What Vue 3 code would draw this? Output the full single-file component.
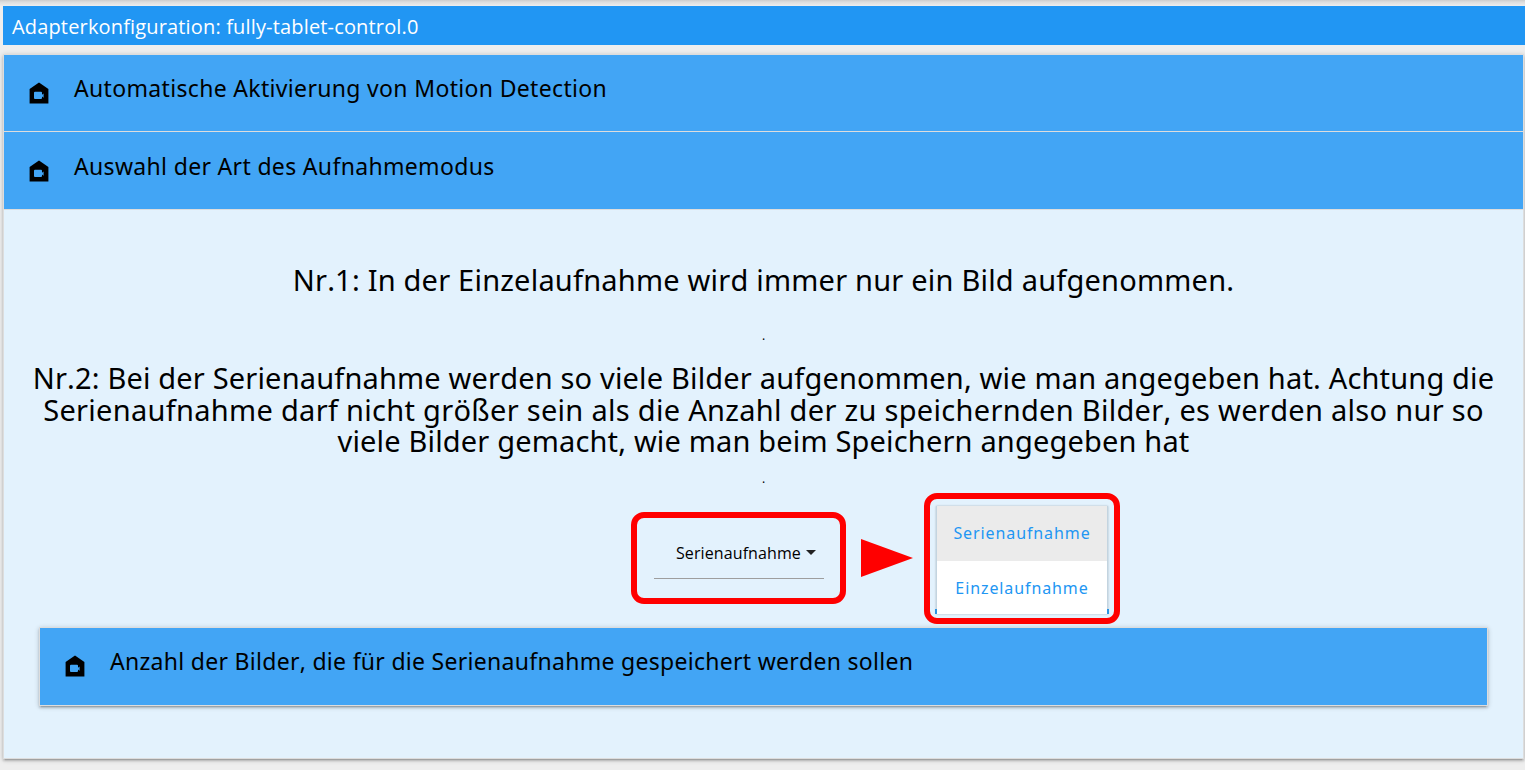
<script setup>
const headers = [
  { text: 'Automatische Aktivierung von Motion Detection', cls: 'h1' },
  { text: 'Auswahl der Art des Aufnahmemodus', cls: 'h2' },
]
const options = ['Serienaufnahme', 'Einzelaufnahme']
const lines = [
  'Nr.2: Bei der Serienaufnahme werden so viele Bilder aufgenommen, wie man angegeben hat. Achtung die',
  'Serienaufnahme darf nicht größer sein als die Anzahl der zu speichernden Bilder, es werden also nur so',
  'viele Bilder gemacht, wie man beim Speichern angegeben hat',
]
const house = 'M12 1.5 2.6 8v14.6h18.8V8zM8 10.8h6q1 0 1 1v2l1.6-1.300v4.300L15 15.500v1.500q0 1-1 1H8q-1 0-1-1v-5.200q0-1 1-1z'
</script>

<template>
  <main class="page">
    <header class="title"><span>Adapterkonfiguration: fully-tablet-control.0</span></header>
    <section class="panel">
      <div v-for="h in headers" :key="h.text" class="head" :class="h.cls">
        <svg class="icon" viewBox="0 0 24 24"><path fill-rule="evenodd" :d="house" /></svg>
        <span>{{ h.text }}</span>
      </div>
      <div class="body">
        <p class="copy first"><span>Nr.1: In der Einzelaufnahme wird immer nur ein Bild aufgenommen.</span></p>
        <p class="dot">.</p>
        <p class="copy second"><span v-for="(l, i) in lines" :key="i" :class="'l' + i">{{ l }}</span></p>
        <p class="dot low">.</p>
        <div class="demo">
          <div class="frame select">
            <div class="field"><span>Serienaufnahme</span><i></i></div>
          </div>
          <svg class="arrow" viewBox="0 0 52 38"><path d="M0 0 52 19 0 38z" fill="#f00" /></svg>
          <div class="frame choices">
            <div class="menu">
              <div v-for="(o, i) in options" :key="o" class="option" :class="{ on: i === 0 }"><span>{{ o }}</span></div>
            </div>
          </div>
        </div>
        <div class="inner">
          <div class="head h3">
            <svg class="icon" viewBox="0 0 24 24"><path fill-rule="evenodd" :d="house" /></svg>
            <span>Anzahl der Bilder, die für die Serienaufnahme gespeichert werden sollen</span>
          </div>
        </div>
      </div>
    </section>
  </main>
</template>

<style>
body { background: #eee; overflow: hidden; }
</style>

<style scoped>
* { box-sizing: border-box; }
.page {
  height: 770px;
  padding: 6px 0 0 3px;
  overflow: hidden;
  background: linear-gradient(#ccc 0, #ddd 2px, #eee 6px, #eee 100%);
  font-family: "Noto Sans", "Open Sans", sans-serif;
  font-kerning: none;
  color: #000;
}
p { margin: 0; }
span { white-space: nowrap; }
.title {
  height: 39px;
  padding-left: 9px;
  background: #2196f3;
  color: #fff;
  font: 20px/41px "Open Sans", sans-serif;
  font-kerning: none;
  letter-spacing: .16px;
}
.panel {
  width: 1521px;
  height: 705px;
  margin-top: 9px;
  border: 1px solid #ddd;
  background: #e3f2fd;
  box-shadow: 0 2px 2px 0 rgba(0,0,0,.14), 0 3px 1px -2px rgba(0,0,0,.12), 0 1px 5px 0 rgba(0,0,0,.2);
}
.head {
  height: 77px;
  display: flex;
  padding: 16px 0 0 23px;
  background: #42a5f5;
  border-bottom: 1px solid #ddd;
  font-size: 23px;
  line-height: 34px;
  letter-spacing: .33px;
}
.h2 { height: 78px; padding-top: 17px; }
.icon { width: 24px; height: 24px; margin: 10px 23px 0 0; flex: none; }
.body { display: flex; flex-direction: column; padding: 50px 35px 0; }
.copy { display: flex; flex-direction: column; align-items: center; font-size: 29px; line-height: 31.5px; letter-spacing: .21px; }
.l0, .l2 { letter-spacing: .17px; }
.l1 { letter-spacing: .3px; }
.first { height: 50px; line-height: 40px; }
.dot { height: 20px; margin-top: 13px; font-size: 12px; line-height: 26px; text-align: center; }
.second { margin-top: 19px; }
.low { margin-top: 9px; height: 19px; }
.demo { display: flex; height: 131px; margin: 8px 0 0 592px; }
.frame { border: 6px solid #f00; border-radius: 13px; }
.select { width: 215px; height: 92px; margin-top: 19px; padding: 14px 16px 0 17px; }
.field {
  height: 47px;
  display: flex;
  align-items: center;
  padding: 0 0 4px 22px;
  border-bottom: 1px solid #9e9e9e;
  font: 16px/24px "Open Sans", sans-serif;
  letter-spacing: .1px;
}
.field i { border: 5px solid transparent; border-top-color: #222; border-bottom: 0; margin: 0 0 0 5px; }
.arrow { width: 52px; height: 38px; margin: 46px 11px 0 15px; }
.choices { width: 196px; height: 131px; padding: 7px 6px 0 6px; }
.menu {
  width: 172px;
  height: 108px;
  border: solid #c3d4e0;
  border-width: 0 1px;
  background: #fff;
  box-shadow: 0 0 2px rgba(0,0,0,.25);
  position: relative;
}
.menu::before, .menu::after {
  content: "";
  position: absolute;
  bottom: 0;
  left: -2px;
  width: 2px;
  height: 5px;
  background: #2b93e2;
}
.menu::after { left: auto; right: -2px; }
.option { height: 55px; display: flex; justify-content: center; color: #2196f3; font-size: 16px; line-height: 54px; letter-spacing: .9px; }
.option.on { background: #ebebeb; }
.inner {
  height: 79px;
  margin-top: 3px;
  border: 1px solid #ddd;
  box-shadow: 0 2px 2px 0 rgba(0,0,0,.14), 0 3px 1px -2px rgba(0,0,0,.12), 0 1px 5px 0 rgba(0,0,0,.2);
}
.h3 { height: 77px; border: 0; letter-spacing: .29px; }
</style>
